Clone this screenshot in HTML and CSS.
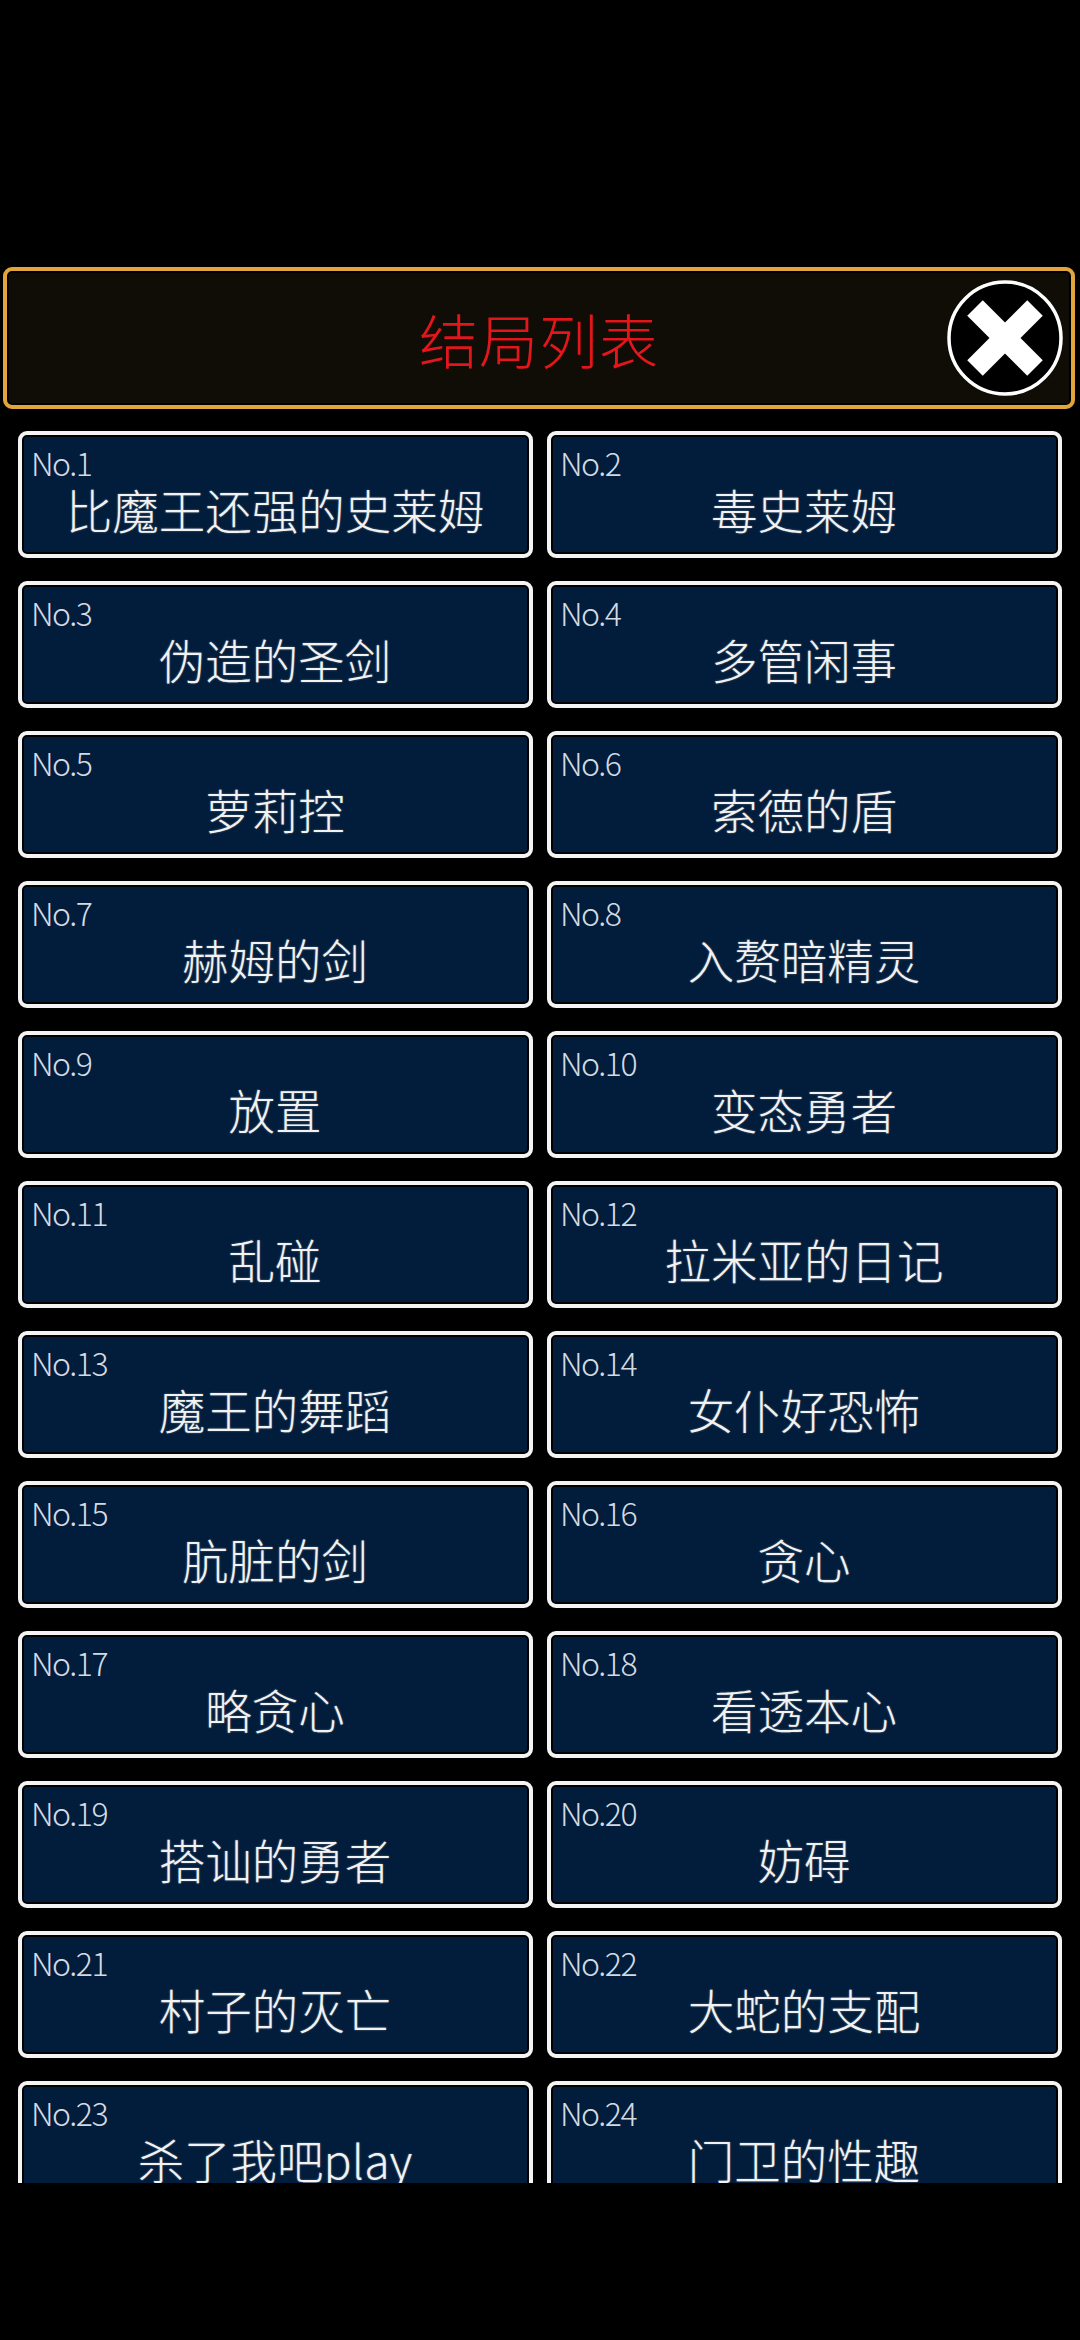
FILE: index.html
```html
<!DOCTYPE html>
<html lang="zh-CN">
<head>
    <meta charset="UTF-8">
    <title>结局列表</title>
    <link rel="stylesheet" href="styles.css">
</head>
<body>
<div class="screen">
    <div class="panel-head">
        <span></span>
        <h1 class="head-title">结局列表</h1>
        <div class="close-btn">
            <svg width="116" height="116" viewBox="0 0 116 116">
                <circle cx="58" cy="58" r="56" fill="#000" stroke="#fff" stroke-width="3.5"/>
                <line x1="28" y1="28" x2="88" y2="88" stroke="#fff" stroke-width="22"/>
                <line x1="88" y1="28" x2="28" y2="88" stroke="#fff" stroke-width="22"/>
            </svg>
        </div>
    </div>

    <div class="end-list">
        <ul class="grid">
            <li class="card"><span class="no">No.1</span><span class="name">比魔王还强的史莱姆</span></li>
            <li class="card"><span class="no">No.2</span><span class="name">毒史莱姆</span></li>
            <li class="card"><span class="no">No.3</span><span class="name">伪造的圣剑</span></li>
            <li class="card"><span class="no">No.4</span><span class="name">多管闲事</span></li>
            <li class="card"><span class="no">No.5</span><span class="name">萝莉控</span></li>
            <li class="card"><span class="no">No.6</span><span class="name">索德的盾</span></li>
            <li class="card"><span class="no">No.7</span><span class="name">赫姆的剑</span></li>
            <li class="card"><span class="no">No.8</span><span class="name">入赘暗精灵</span></li>
            <li class="card"><span class="no">No.9</span><span class="name">放置</span></li>
            <li class="card"><span class="no">No.10</span><span class="name">变态勇者</span></li>
            <li class="card"><span class="no">No.11</span><span class="name">乱碰</span></li>
            <li class="card"><span class="no">No.12</span><span class="name">拉米亚的日记</span></li>
            <li class="card"><span class="no">No.13</span><span class="name">魔王的舞蹈</span></li>
            <li class="card"><span class="no">No.14</span><span class="name">女仆好恐怖</span></li>
            <li class="card"><span class="no">No.15</span><span class="name">肮脏的剑</span></li>
            <li class="card"><span class="no">No.16</span><span class="name">贪心</span></li>
            <li class="card"><span class="no">No.17</span><span class="name">略贪心</span></li>
            <li class="card"><span class="no">No.18</span><span class="name">看透本心</span></li>
            <li class="card"><span class="no">No.19</span><span class="name">搭讪的勇者</span></li>
            <li class="card"><span class="no">No.20</span><span class="name">妨碍</span></li>
            <li class="card"><span class="no">No.21</span><span class="name">村子的灭亡</span></li>
            <li class="card"><span class="no">No.22</span><span class="name">大蛇的支配</span></li>
            <li class="card"><span class="no">No.23</span><span class="name">杀了我吧play</span></li>
            <li class="card"><span class="no">No.24</span><span class="name">门卫的性趣</span></li>
        </ul>
    </div>
</div>
</body>
</html>
```

FILE: styles.css
```css
*{
    padding: 0;
    margin: 0;
    box-sizing: border-box;
}

html, body{
    background: #000;
    width: 1080px;
    height: 2340px;
    overflow: hidden;
    font-family: "Noto Sans CJK SC", "Noto Sans", sans-serif;
}

.screen{
    padding-top: 267px;
}

/* 顶部金边标题栏 */
.panel-head{
    margin: 0 5px 0 3px;
    height: 142px;
    border: 4px solid #e2a53c;
    border-radius: 9px;
    background: #0f0d05;
    box-shadow: inset 0 0 0 2px #000;
    display: grid;
    grid-template-columns: 1fr auto 1fr;
    align-items: center;
}

.head-title{
    font-size: 59px;
    font-weight: 300;
    color: #e3161b;
    line-height: 1;
    letter-spacing: 1px;
}

.close-btn{
    justify-self: end;
    margin-right: 8px;
    width: 116px;
    height: 116px;
}

.close-btn svg{
    display: block;
}

/* 结局列表，底部被裁切 */
.end-list{
    height: 1774px;
    overflow: hidden;
    padding: 22px 0 0 18px;
}

.grid{
    list-style: none;
    display: grid;
    grid-template-columns: 515px 515px;
    column-gap: 14px;
    row-gap: 23px;
}

.card{
    height: 127px;
    border: 4px solid #f4f4f4;
    border-radius: 9px;
    background: #021d3b;
    box-shadow: inset 0 0 0 2px #000;
    display: flex;
    flex-direction: column;
    padding: 9px 10px 0 9px;
}

.no{
    font-size: 32px;
    font-weight: 300;
    line-height: 36px;
    color: #d3dae2;
    letter-spacing: -1.5px;
}

.name{
    margin-top: 3px;
    font-size: 46.5px;
    font-weight: 300;
    line-height: 52px;
    color: #f2f2f2;
    text-align: center;
    text-shadow: 0 0 2px rgba(255,255,255,0.4);
}
```
